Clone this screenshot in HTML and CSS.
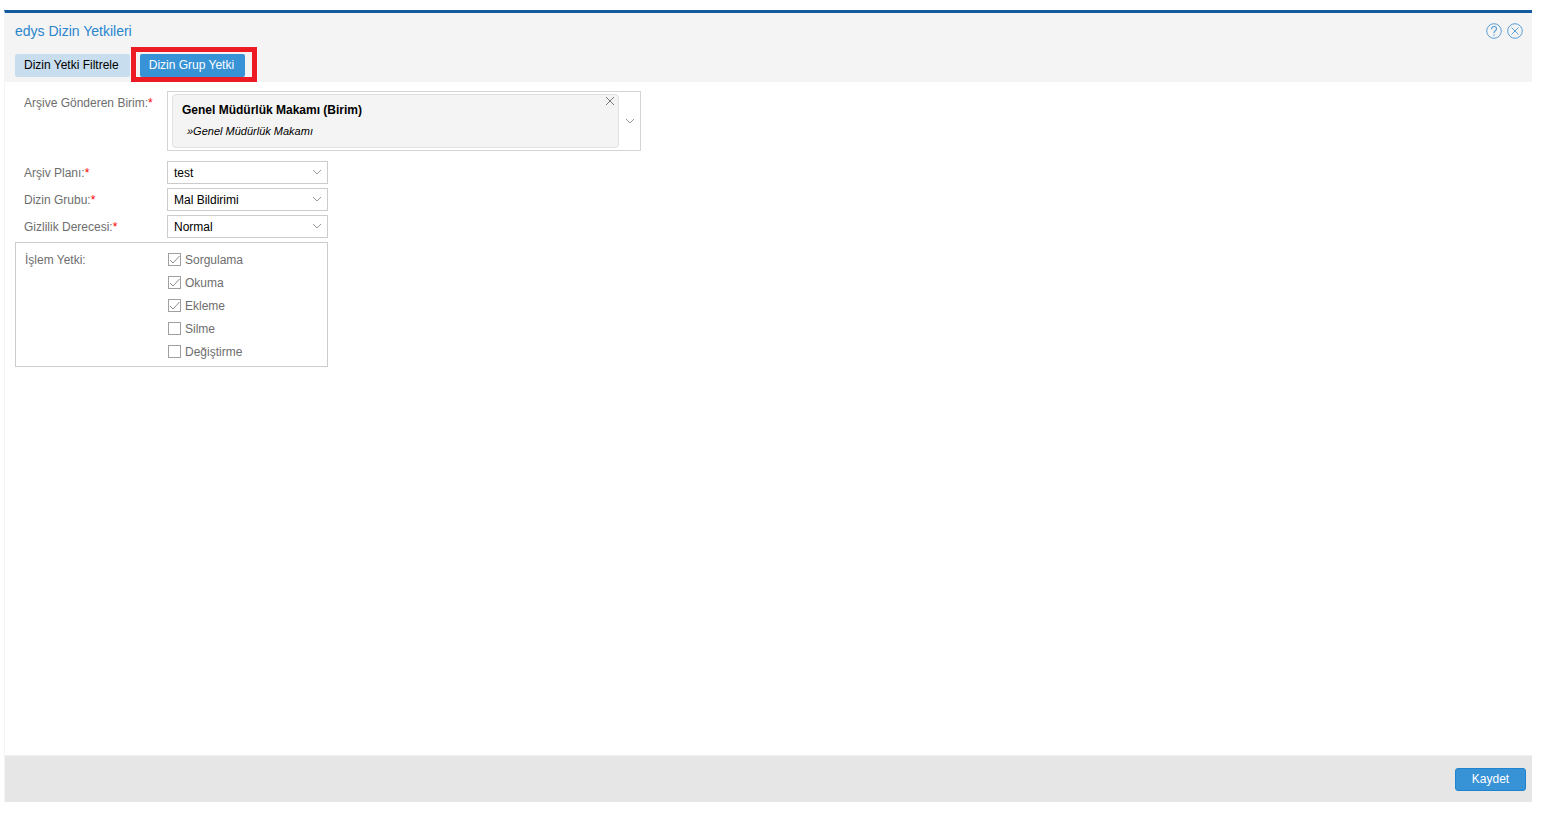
FILE: index.html
```html
<!DOCTYPE html>
<html lang="tr">
<head>
    <meta charset="UTF-8">
    <meta name="viewport" content="width=device-width, initial-scale=1.0">
    <title>edys Dizin Yetkileri</title>
    <link rel="stylesheet" href="styles.css">
</head>
<body>
    <div class="window">
        <header class="window-header">
            <div class="title-bar">
                <h1>edys Dizin Yetkileri</h1>
                <div class="window-tools">
                    <button type="button" class="icon-button" aria-label="Yardım">
                        <svg width="16" height="16" viewBox="0 0 16 16" fill="none" stroke="currentColor">
                            <circle cx="8" cy="8" r="7.3"/>
                            <path d="M5.5 6.2C5.5 2.7 10.5 2.7 10.5 5.8C10.5 7.8 8 7.8 8 10.2M8 11.4V12.8" stroke-width="1.2"/>
                        </svg>
                    </button>
                    <button type="button" class="icon-button" aria-label="Kapat">
                        <svg width="16" height="16" viewBox="0 0 16 16" fill="none" stroke="currentColor">
                            <circle cx="8" cy="8" r="7.3"/>
                            <path d="M4.5 4.5L11.5 11.5M11.5 4.5L4.5 11.5"/>
                        </svg>
                    </button>
                </div>
            </div>
            <nav class="tabs">
                <button type="button" class="tab">Dizin Yetki Filtrele</button>
                <div class="tab-marked">
                    <button type="button" class="tab active">Dizin Grup Yetki</button>
                </div>
            </nav>
        </header>

        <form class="window-form" id="yetki_form">
            <div class="form-row unit-row">
                <span class="label" id="birim_label">Arşive Gönderen Birim:<span class="required">*</span></span>
                <div class="unit-box" role="group" aria-labelledby="birim_label">
                    <div class="unit-item">
                        <div class="unit-text">
                            <strong>Genel Müdürlük Makamı (Birim)</strong>
                            <em>»Genel Müdürlük Makamı</em>
                        </div>
                        <button type="button" class="unit-remove" aria-label="Kaldır">
                            <svg width="10" height="10" viewBox="0 0 10 10" fill="none" stroke="currentColor">
                                <path d="M1 1L9 9M9 1L1 9"/>
                            </svg>
                        </button>
                    </div>
                    <button type="button" class="unit-open" aria-label="Birim seç">
                        <svg width="10" height="6" viewBox="0 0 10 6" fill="none" stroke="currentColor">
                            <path d="M1 1L5 5L9 1"/>
                        </svg>
                    </button>
                </div>
            </div>

            <div class="form-row">
                <label class="label" for="arsiv_plani">Arşiv Planı:<span class="required">*</span></label>
                <div class="select-box">
                    <select id="arsiv_plani" name="arsiv_plani">
                        <option>test</option>
                    </select>
                    <svg width="10" height="6" viewBox="0 0 10 6" fill="none" stroke="currentColor">
                        <path d="M1 1L5 5L9 1"/>
                    </svg>
                </div>
            </div>
            <div class="form-row">
                <label class="label" for="dizin_grubu">Dizin Grubu:<span class="required">*</span></label>
                <div class="select-box">
                    <select id="dizin_grubu" name="dizin_grubu">
                        <option>Mal Bildirimi</option>
                    </select>
                    <svg width="10" height="6" viewBox="0 0 10 6" fill="none" stroke="currentColor">
                        <path d="M1 1L5 5L9 1"/>
                    </svg>
                </div>
            </div>
            <div class="form-row">
                <label class="label" for="gizlilik">Gizlilik Derecesi:<span class="required">*</span></label>
                <div class="select-box">
                    <select id="gizlilik" name="gizlilik">
                        <option>Normal</option>
                    </select>
                    <svg width="10" height="6" viewBox="0 0 10 6" fill="none" stroke="currentColor">
                        <path d="M1 1L5 5L9 1"/>
                    </svg>
                </div>
            </div>

            <div class="permissions" role="group" aria-labelledby="yetki_label">
                <span class="label" id="yetki_label">İşlem Yetki:</span>
                <div class="check-list">
                    <div class="check">
                        <span class="check-box">
                            <input type="checkbox" id="sorgulama" name="sorgulama" checked>
                            <svg width="13" height="13" viewBox="0 0 13 13" fill="none" stroke="currentColor"><path d="M2 7L5 10L11.5 3"/></svg>
                        </span>
                        <label for="sorgulama">Sorgulama</label>
                    </div>
                    <div class="check">
                        <span class="check-box">
                            <input type="checkbox" id="okuma" name="okuma" checked>
                            <svg width="13" height="13" viewBox="0 0 13 13" fill="none" stroke="currentColor"><path d="M2 7L5 10L11.5 3"/></svg>
                        </span>
                        <label for="okuma">Okuma</label>
                    </div>
                    <div class="check">
                        <span class="check-box">
                            <input type="checkbox" id="ekleme" name="ekleme" checked>
                            <svg width="13" height="13" viewBox="0 0 13 13" fill="none" stroke="currentColor"><path d="M2 7L5 10L11.5 3"/></svg>
                        </span>
                        <label for="ekleme">Ekleme</label>
                    </div>
                    <div class="check">
                        <span class="check-box">
                            <input type="checkbox" id="silme" name="silme">
                            <svg width="13" height="13" viewBox="0 0 13 13" fill="none" stroke="currentColor"><path d="M2 7L5 10L11.5 3"/></svg>
                        </span>
                        <label for="silme">Silme</label>
                    </div>
                    <div class="check">
                        <span class="check-box">
                            <input type="checkbox" id="degistirme" name="degistirme">
                            <svg width="13" height="13" viewBox="0 0 13 13" fill="none" stroke="currentColor"><path d="M2 7L5 10L11.5 3"/></svg>
                        </span>
                        <label for="degistirme">Değiştirme</label>
                    </div>
                </div>
            </div>
        </form>

        <footer class="window-footer">
            <button type="submit" class="save" form="yetki_form">Kaydet</button>
        </footer>
    </div>
</body>
</html>
```
FILE: styles.css
```css
* {
    box-sizing: border-box;
}
body {
    margin: 0;
    padding: 10px 19px 15px 4px;
    min-height: 100vh;
    display: flex;
    background-color: #fff;
    color: #6e6e6e;
    font-family: "Liberation Sans", Arial, sans-serif;
    font-size: 12px;
    line-height: 16px;
}
button, select {
    font: inherit;
    cursor: pointer;
}
svg {
    display: block;
}

/* window */
.window {
    flex: 1;
    display: flex;
    flex-direction: column;
    border-top: 3px solid #135a9e;
    border-left: 1px solid #f4f4f4;
}
.window-header {
    background-color: #f4f4f4;
    padding: 8px 9px 5px 10px;
}
.title-bar {
    display: flex;
    justify-content: space-between;
    align-items: center;
    height: 20px;
    margin-bottom: 13px;
}
.title-bar h1 {
    margin: 0;
    font-size: 14px;
    font-weight: normal;
    color: #2a85cd;
}
.window-tools {
    display: flex;
    gap: 5px;
}
.icon-button {
    padding: 0;
    border: none;
    background: none;
    color: #5b9fd6;
}

/* tabs */
.tabs {
    display: flex;
    gap: 10px;
}
.tab {
    display: block;
    height: 23px;
    padding: 0 11px 1px 9px;
    border: none;
    border-radius: 2px;
    background-color: #c8deee;
    color: #000;
}
.tab.active {
    background-color: #3892d6;
    color: #fff;
}
.tab-marked {
    position: relative;
}
.tab-marked::after {
    content: "";
    position: absolute;
    inset: -7px -12px -5px -9px;
    border: 5px solid #ed1c24;
    pointer-events: none;
}

/* form */
.window-form {
    flex: 1;
    padding: 9px 10px 20px;
}
.form-row {
    display: flex;
    align-items: center;
    margin-bottom: 4px;
}
.unit-row {
    align-items: flex-start;
    margin-bottom: 10px;
}
.unit-row .label {
    padding-top: 4px;
}
.label {
    flex: none;
    width: 152px;
    padding-left: 9px;
    white-space: nowrap;
}
.required {
    color: #f00;
}
.unit-box {
    display: flex;
    width: 474px;
    padding: 2px 0 2px 4px;
    border: 1px solid #d4d4d4;
}
.unit-item {
    flex: 1;
    display: flex;
    justify-content: space-between;
    align-items: flex-start;
    padding: 5px 3px 5px 9px;
    border: 1px solid #e0e0e0;
    border-radius: 4px;
    background-color: #f4f4f4;
}
.unit-text {
    color: #000;
}
.unit-text strong, .unit-text em {
    display: block;
    line-height: 21px;
}
.unit-text em {
    padding-left: 5px;
    font-size: 11px;
}
.unit-remove {
    margin-top: -4px;
    padding: 0;
    border: none;
    background: none;
    color: #777;
}
.unit-open {
    display: flex;
    justify-content: center;
    align-items: center;
    width: 21px;
    padding: 0;
    border: none;
    background: none;
    color: #999;
}
.select-box {
    position: relative;
    width: 161px;
}
.select-box select {
    appearance: none;
    display: block;
    width: 100%;
    height: 23px;
    padding: 0 20px 0 6px;
    border: 1px solid #ccc;
    border-radius: 0;
    background-color: #fff;
    color: #000;
}
.select-box svg {
    position: absolute;
    top: 8px;
    right: 6px;
    color: #999;
    pointer-events: none;
}

/* permissions */
.permissions {
    display: flex;
    width: 313px;
    padding: 5px 0 3px;
    border: 1px solid #ccc;
}
.permissions .label {
    padding-top: 4px;
}
.check {
    display: flex;
    align-items: center;
    gap: 4px;
    height: 23px;
}
.check-box {
    position: relative;
    width: 13px;
    height: 13px;
}
.check-box input {
    appearance: none;
    display: block;
    width: 13px;
    height: 13px;
    margin: 0;
    border: 1px solid #a0a0a0;
    background-color: #fff;
}
.check-box svg {
    position: absolute;
    top: 0;
    left: 0;
    display: none;
    color: #8c8c8c;
    pointer-events: none;
}
.check-box input:checked + svg {
    display: block;
}

/* footer */
.window-footer {
    display: flex;
    justify-content: flex-end;
    padding: 12px 6px 11px;
    background-color: #e6e6e6;
    border-top: 1px solid #f0f0f0;
}
.save {
    width: 71px;
    height: 23px;
    padding: 0 0 1px;
    border: 1px solid #1f83cf;
    border-radius: 3px;
    background-color: #3892d6;
    color: #fff;
}
```
